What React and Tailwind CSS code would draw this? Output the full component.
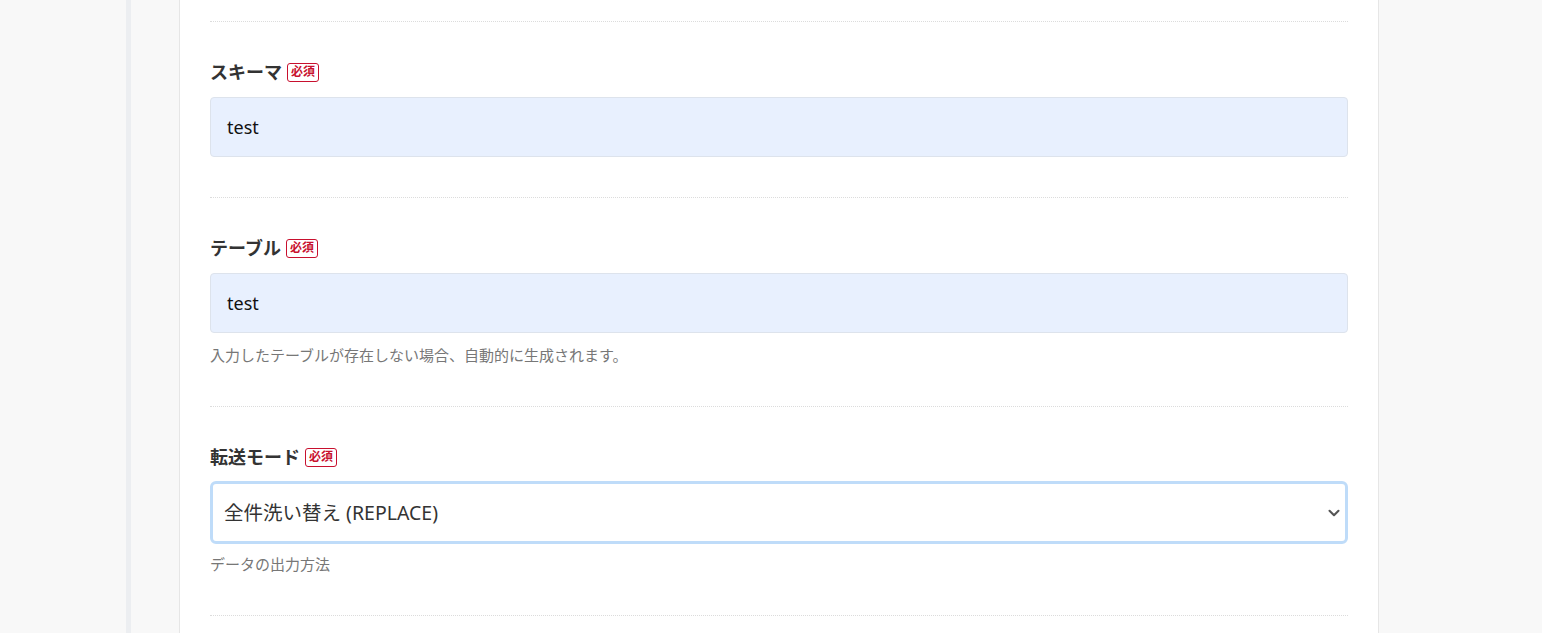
import { ChevronDown } from 'lucide-react';

function Required() {
  return (
    <span className="ml-[5px] inline-flex h-[19px] items-center rounded-[3px] border border-[#c8102e] px-[3px] text-[12px] font-bold leading-none text-[#c8102e]">
      必須
    </span>
  );
}

function Section({ label, help, helpGap = 'mt-[11px]', children }) {
  return (
    <div className="border-t border-dotted border-[#dcdcdc] pt-[38px] pb-[40px]">
      <div className="mb-[13px] flex h-6 items-center text-[18px] font-bold text-[#333]">
        {label}
        <Required />
      </div>
      {children}
      {help && <div className={`${helpGap} text-[15px] leading-[22px] text-[#777]`}>{help}</div>}
    </div>
  );
}

function TextInput({ value }) {
  return (
    <div className="flex h-[60px] items-center rounded-[4px] border border-[#dde3ec] bg-[#e8f0fe] px-4 text-[18px] text-[#111]">
      {value}
    </div>
  );
}

export default function App() {
  return (
    <div className="flex min-h-screen bg-[#f8f8f8] font-['Noto_Sans','Noto_Sans_CJK_JP',sans-serif]">
      <div className="w-[126px] shrink-0" />
      <div className="w-[5px] shrink-0 bg-[#eceef1]" />
      <div className="w-[48px] shrink-0" />
      <div className="w-[1200px] shrink-0 border-x border-[#e6e6e6] bg-white px-[30px]">
        <div className="h-[21px]" />
        <Section label="スキーマ">
          <TextInput value="test" />
        </Section>
        <Section label="テーブル" help="入力したテーブルが存在しない場合、自動的に生成されます。">
          <TextInput value="test" />
        </Section>
        <Section label="転送モード" help="データの出力方法" helpGap="mt-[9px]">
          <div className="-mt-px flex h-[63px] items-center justify-between rounded-[6px] border-[3px] border-[#bfdcf9] bg-white pl-[11px] pr-[2px] text-[19.5px] text-[#333]">
            <span>全件洗い替え (REPLACE)</span>
            <ChevronDown size={18} strokeWidth={2.8} className="text-[#555]" />
          </div>
        </Section>
        <div className="border-t border-dotted border-[#dcdcdc] pb-[40px]" />
      </div>
    </div>
  );
}
